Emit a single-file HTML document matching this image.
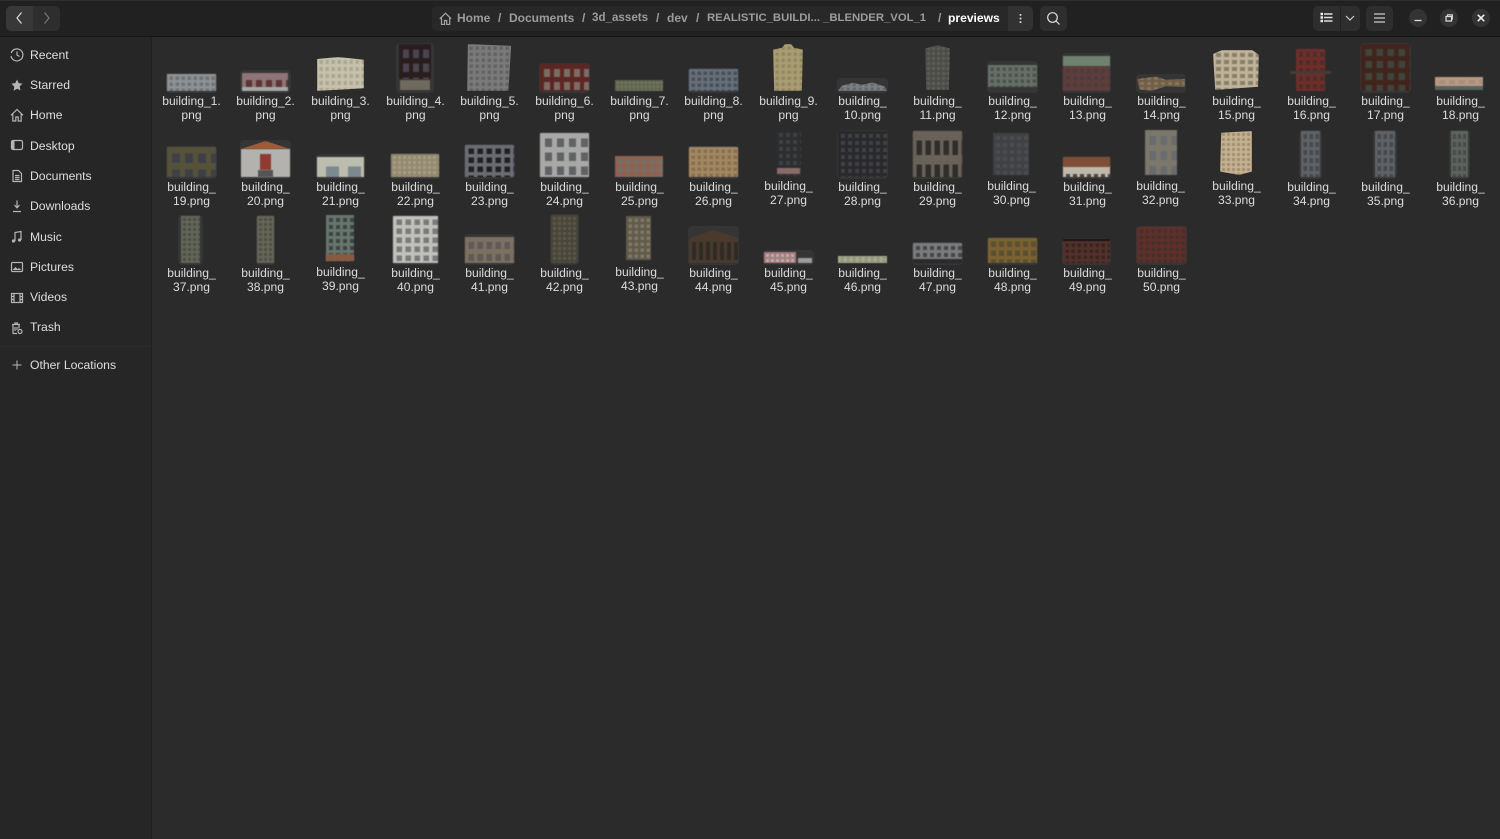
<!DOCTYPE html>
<html><head><meta charset="utf-8"><title>previews</title>
<style>
html,body{margin:0;padding:0;background:#2b2b2b}
#a{position:relative;width:1500px;height:839px;overflow:hidden;background:#2b2b2b;font-family:"Liberation Sans",sans-serif;font-size:13px;color:#dcdcdc}
#a div,#a span,#a svg{position:absolute}
#h{left:0;top:0;width:1500px;height:37px;background:#212121;border-top:1px solid #2d2d2d;box-sizing:border-box;border-bottom:1px solid #161616}
#s{left:0;top:37px;width:151px;height:802px;background:#262626;border-right:1px solid #1f1f1f}
.btn{background:#2e2e2e;border-radius:5px;top:6px;height:25px}
.c{top:9px;width:18px;height:18px;border-radius:50%;background:#333}
.cr{top:7px;font-weight:bold;font-size:12px;color:#9c9c9c;white-space:nowrap;line-height:22px}
.n{left:30px;white-space:nowrap;line-height:16px;font-size:12.2px;color:#dedede}
.l{width:81px;text-align:center;line-height:14px;font-size:12.1px;color:#dcdcdc;white-space:nowrap}
.t{background:#353535;border-radius:4px}
.t i{position:absolute;left:1px;right:1px;top:1px;bottom:2px;display:block;filter:blur(.55px);background:linear-gradient(90deg,var(--c) 40%,transparent 40%) 0 0/var(--x,6px) 100%,linear-gradient(var(--c) 40%,transparent 40%) 0 0/100% var(--y,6px),var(--w)}
svg{fill:none;stroke:#c8c8c8;stroke-width:1.2}
</style></head><body><div id="a">
<div id="h"></div>
<div id="s"></div>
<div style="left:151px;top:37px;width:1px;height:802px;background:#1f1f1f"></div>
<div class="btn" style="left:6px;width:27px;background:#383838;border-radius:5px 0 0 5px"></div>
<div class="btn" style="left:33px;width:27px;border-radius:0 5px 5px 0"></div>
<svg style="left:14px;top:11px" width="10" height="14" viewBox="0 0 10 14"><path d="M7.500 1.500 3 7l4.500 5.500" stroke="#ddd"/></svg>
<svg style="left:42px;top:11px" width="10" height="14" viewBox="0 0 10 14"><path d="M2.500 1.500 7 7l-4.500 5.500" stroke="#777"/></svg>
<div class="btn" style="left:432px;width:601px;background:#282828"></div>
<div class="btn" style="left:1008px;width:25px;background:#323232;border-radius:0 5px 5px 0"></div>
<svg style="left:439px;top:12px" width="13" height="13" viewBox="0 0 13 13"><path d="M.8 6.800 6.500 1.200l5.700 5.600M2.500 5.500v7h3V8.500h2.200v4h3v-7" stroke="#a5a5a5"/></svg>
<span class="cr" style="left:457px">Home</span><span class="cr" style="left:498px">/</span>
<span class="cr" style="left:509px">Documents</span><span class="cr" style="left:582px">/</span>
<span class="cr" style="left:592px;font-size:11.6px">3d_assets</span><span class="cr" style="left:656px">/</span>
<span class="cr" style="left:667px">dev</span><span class="cr" style="left:696px">/</span>
<span class="cr" style="left:707px;font-size:11.3px">REALISTIC_BUILDI... _BLENDER_VOL_1</span><span class="cr" style="left:938px">/</span>
<span class="cr" style="left:948px;color:#fff;font-size:12.100px">previews</span>
<svg style="left:1014px;top:12px" width="13" height="13" viewBox="0 0 13 13"><path d="M6.500 2v1.800M6.500 5.600v1.800M6.500 9.200v1.800" stroke="#ddd" stroke-width="1.700"/></svg>
<div class="btn" style="left:1040px;width:27px"></div>
<svg style="left:1046px;top:11px" width="15" height="15" viewBox="0 0 15 15"><circle cx="6.500" cy="6.500" r="4.800" stroke="#ddd"/><path d="m10 10 3.500 3.500" stroke="#ddd"/></svg>
<div class="btn" style="left:1313px;width:27px;border-radius:5px 0 0 5px"></div>
<div class="btn" style="left:1341px;width:19px;border-radius:0 5px 5px 0"></div>
<svg style="left:1320px;top:12px" width="13" height="12" viewBox="0 0 13 12"><path d="M4 2h8.500M4 5.500h8.500M4 9h8.500" stroke="#ddd" stroke-width="1.400"/><path d="M.5 2h2.500M.5 5.500h2.500M.5 9h2.500" stroke="#eee" stroke-width="2.400"/></svg>
<svg style="left:1345px;top:14px" width="10" height="9" viewBox="0 0 10 9"><path d="m1 2 4 4 4-4" stroke="#ccc"/></svg>
<div class="btn" style="left:1366px;width:27px"></div>
<svg style="left:1373px;top:12px" width="13" height="12" viewBox="0 0 13 12"><path d="M1 2h11M1 6h11M1 10h11" stroke="#ccc" stroke-width="1.300"/></svg>
<div class="c" style="left:1409px"></div><div class="c" style="left:1440px"></div><div class="c" style="left:1472px"></div>
<svg style="left:1409px;top:9px" width="18" height="18" viewBox="0 0 18 18"><path d="M5.500 11.500h7" stroke="#ddd" stroke-width="1.300"/></svg>
<svg style="left:1440px;top:9px" width="18" height="18" viewBox="0 0 18 18"><path d="M6 7.500h5.500V12H6zM7.500 7.500V5.800h4.800v4.400h-.8" stroke="#ddd"/></svg>
<svg style="left:1472px;top:9px" width="18" height="18" viewBox="0 0 18 18"><path d="m5.800 5.800 6.400 6.400m0-6.400-6.400 6.400" stroke="#eee" stroke-width="1.600"/></svg>

<svg style="left:10px;top:48px" width="14" height="14" viewBox="0 0 14 14"><path d="M1.200 5A6 6 0 1 1 1 8M7 3.500V7l2.500 1.500" stroke="#b5b5b5"/></svg><div class="n" style="top:47px">Recent</div>
<svg style="left:10px;top:78px" width="14" height="14" viewBox="0 0 14 14"><path d="m7 1.500 1.700 3.600 3.800.5-2.800 2.700.7 3.900L7 10.800l-3.400 1.900.7-3.900L1.500 5.600l3.800-.5z" fill="#b5b5b5" stroke="none"/></svg><div class="n" style="top:77px">Starred</div>
<svg style="left:10px;top:108px" width="14" height="14" viewBox="0 0 14 14"><path d="M1 7.300 7 1.500l6 5.800M2.800 6v7h3V9h2.400v4h3V6" stroke="#b5b5b5"/></svg><div class="n" style="top:107px">Home</div>
<svg style="left:10px;top:138px" width="14" height="14" viewBox="0 0 14 14"><rect x="1.500" y="2.500" width="11" height="9" rx="1.500" stroke="#b5b5b5"/><path d="M2 3h2.500v8H2z" fill="#b5b5b5" stroke="none"/></svg><div class="n" style="top:138px">Desktop</div>
<svg style="left:10px;top:169px" width="14" height="14" viewBox="0 0 14 14"><path d="M3 1.500h5.500L11.500 4.500v8H3zM5 6.500h4.500M5 8.500h4.500M5 10.500h4.500" stroke="#b5b5b5"/></svg><div class="n" style="top:168px">Documents</div>
<svg style="left:10px;top:199px" width="14" height="14" viewBox="0 0 14 14"><path d="M7 1.500v7M4.500 6 7 8.800 9.500 6M3 12.500h8" stroke="#b5b5b5"/></svg><div class="n" style="top:198px">Downloads</div>
<svg style="left:10px;top:230px" width="14" height="14" viewBox="0 0 14 14"><path d="M5 11V2.500l6-1V10" stroke="#b5b5b5"/><circle cx="3.500" cy="11" r="1.600" fill="#b5b5b5" stroke="none"/><circle cx="9.500" cy="10" r="1.600" fill="#b5b5b5" stroke="none"/></svg><div class="n" style="top:229px">Music</div>
<svg style="left:10px;top:260px" width="14" height="14" viewBox="0 0 14 14"><rect x="1.500" y="2.500" width="11" height="9" rx="1" stroke="#b5b5b5"/><path d="m2.500 10 3-3 2 2 1.500-1 2.500 2z" fill="#b5b5b5" stroke="none"/></svg><div class="n" style="top:259px">Pictures</div>
<svg style="left:10px;top:291px" width="14" height="14" viewBox="0 0 14 14"><rect x="1.500" y="2.500" width="11" height="9" stroke="#b5b5b5"/><path d="M4 2.500v9M10 2.500v9M1.500 5.500H4M1.500 8.500H4M10 5.500h2.500M10 8.500h2.500" stroke="#b5b5b5"/></svg><div class="n" style="top:289px">Videos</div>
<svg style="left:10px;top:321px" width="14" height="14" viewBox="0 0 14 14"><path d="M2 3.500h8M3 3.500v9h4M9 3.500v4M5 3.500V2h2.500v1.500M5 6v4M7 6v3" stroke="#b5b5b5"/><circle cx="10" cy="10.500" r="2" stroke="#b5b5b5"/></svg><div class="n" style="top:319px">Trash</div>
<div style="left:0;top:346px;width:151px;height:1px;background:#2c2c2c"></div>
<svg style="left:10px;top:358px" width="14" height="14" viewBox="0 0 14 14"><path d="M7 2.500v9M2.500 7h9" stroke="#b5b5b5" stroke-width="1"/></svg><div class="n" style="top:357px">Other Locations</div>

<div class="t" style="left:166px;top:73px;width:51px;height:20px"><i style="--c:#8d9296;--w:#6c7276;--x:6px;--y:6px"></i></div><div class="l" style="left:151px;top:94px">building_1.<br>png</div>
<div class="t" style="left:240px;top:70px;width:51px;height:23px"><i style="--c:#8f7478;--w:#5c3434;--x:10px;--y:18px;left:2px;right:3px;top:3px;border-bottom:4px solid #a8a8a8"></i></div><div class="l" style="left:225px;top:94px">building_2.<br>png</div>
<div class="t" style="left:316px;top:56px;width:49px;height:37px;background:none"><i style="--c:#c6c2ac;--w:#aaa690;--x:6px;--y:7px;clip-path:polygon(0 6%,45% 0,100% 8%,100% 92%,0 100%)"></i></div><div class="l" style="left:300px;top:94px">building_3.<br>png</div>
<div class="t" style="left:396px;top:43px;width:38px;height:50px"><i style="--c:#2a1d1e;--w:#4a4550;--x:10px;--y:14px;left:3px;right:3px;bottom:14px"></i><i style="background:#6e6a60;left:4px;right:4px;top:37px;bottom:3px"></i></div><div class="l" style="left:375px;top:94px">building_4.<br>png</div>
<div class="t" style="left:466px;top:43px;width:47px;height:50px;background:none"><i style="--c:#7b7b7e;--w:#646260;--x:6px;--y:6px;clip-path:polygon(2% 0,98% 4%,92% 100%,0 100%)"></i></div><div class="l" style="left:449px;top:94px">building_5.<br>png</div>
<div class="t" style="left:539px;top:63px;width:51px;height:30px"><i style="--c:#5c2623;--w:#7c6c66;--x:10px;--y:13px"></i></div><div class="l" style="left:524px;top:94px">building_6.<br>png</div>
<div class="t" style="left:614px;top:79px;width:50px;height:14px;background:none"><i style="--c:#5e6350;--w:#72775f;--x:4px;--y:4px"></i></div><div class="l" style="left:599px;top:94px">building_7.<br>png</div>
<div class="t" style="left:688px;top:68px;width:51px;height:25px"><i style="--c:#667079;--w:#474f59;--x:6px;--y:6px"></i></div><div class="l" style="left:673px;top:94px">building_8.<br>png</div>
<div class="t" style="left:772px;top:43px;width:32px;height:50px;background:none"><i style="--c:#a99e72;--w:#928763;--x:6px;--y:6px;clip-path:polygon(0 12%,30% 8%,40% 0,60% 0,70% 8%,100% 12%,96% 100%,4% 100%)"></i></div><div class="l" style="left:748px;top:94px">building_9.<br>png</div>
<div class="t" style="left:837px;top:78px;width:51px;height:15px"><i style="--c:#7e8286;--w:#62666a;--x:6px;--y:4px;top:4px;clip-path:polygon(0 100%,8% 40%,30% 10%,50% 30%,70% 5%,95% 50%,100% 100%)"></i></div><div class="l" style="left:822px;top:94px">building_<br>10.png</div>
<div class="t" style="left:924px;top:44px;width:27px;height:48px;background:none"><i style="--c:#4a4a47;--w:#5f5e58;--x:5px;--y:5px;clip-path:polygon(0 8%,50% 0,100% 8%,95% 100%,5% 100%)"></i></div><div class="l" style="left:897px;top:94px">building_<br>11.png</div>
<div class="t" style="left:987px;top:61px;width:51px;height:32px"><i style="--c:#667069;--w:#4b534b;--x:6px;--y:6px;top:4px;bottom:6px"></i></div><div class="l" style="left:972px;top:94px">building_<br>12.png</div>
<div class="t" style="left:1062px;top:53px;width:49px;height:40px"><i style="--c:#5f3d3c;--w:#4a3d3d;--x:7px;--y:7px;top:13px"></i><i style="background:#6f8270;bottom:27px;top:3px"></i></div><div class="l" style="left:1047px;top:94px">building_<br>13.png</div>
<div class="t" style="left:1136px;top:74px;width:50px;height:19px"><i style="--c:#705d46;--w:#85775f;--x:7px;--y:5px;clip-path:polygon(0 25%,40% 10%,60% 30%,100% 25%,100% 75%,60% 70%,30% 100%,5% 90%)"></i></div><div class="l" style="left:1121px;top:94px">building_<br>14.png</div>
<div class="t" style="left:1212px;top:49px;width:48px;height:43px;background:none"><i style="--c:#c2b498;--w:#857f6c;--x:8px;--y:7px;clip-path:polygon(0 10%,20% 0,85% 0,100% 12%,98% 92%,5% 100%)"></i></div><div class="l" style="left:1196px;top:94px">building_<br>15.png</div>
<div class="t" style="left:1289px;top:48px;width:43px;height:45px;background:none"><i style="--c:#6f2e2a;--w:#512b29;--x:7px;--y:8px;left:7px;right:7px"></i><i style="background:#4a3a34;top:23px;height:3px;bottom:auto"></i></div><div class="l" style="left:1271px;top:94px">building_<br>16.png</div>
<div class="t" style="left:1360px;top:43px;width:51px;height:50px"><i style="--c:#41251c;--w:#3f443c;--x:11px;--y:12px"></i></div><div class="l" style="left:1345px;top:94px">building_<br>17.png</div>
<div class="t" style="left:1434px;top:76px;width:50px;height:16px;background:none"><i style="--c:#b89a84;--w:#a88f7c;--x:10px;--y:7px;border-bottom:4px solid #57655f"></i></div><div class="l" style="left:1420px;top:94px">building_<br>18.png</div>

<div class="t" style="left:166px;top:146px;width:51px;height:33px"><i style="--c:#555239;--w:#3e4048;--x:13px;--y:16px"></i></div><div class="l" style="left:151px;top:180px">building_<br>19.png</div>
<div class="t" style="left:240px;top:140px;width:51px;height:39px"><i style="--c:#b4b2ae;--w:#b4b2ae;top:9px"></i><i style="background:#a05a38;bottom:30px;clip-path:polygon(0 100%,50% 0,100% 100%)"></i><i style="background:#8f3b34;left:20px;right:20px;top:14px;bottom:9px"></i><i style="background:#555;left:18px;right:18px;top:30px;bottom:2px"></i></div><div class="l" style="left:225px;top:180px">building_<br>20.png</div>
<div class="t" style="left:316px;top:154px;width:49px;height:25px"><i style="--c:#bdbdaf;--w:#7c8a90;--x:22px;--y:24px;top:3px"></i></div><div class="l" style="left:300px;top:180px">building_<br>21.png</div>
<div class="t" style="left:390px;top:153px;width:50px;height:26px"><i style="--c:#91886f;--w:#a89d84;--x:5px;--y:5px"></i></div><div class="l" style="left:375px;top:180px">building_<br>22.png</div>
<div class="t" style="left:464px;top:144px;width:51px;height:35px"><i style="--c:#6a6c72;--w:#1f2024;--x:9px;--y:9px"></i></div><div class="l" style="left:449px;top:180px">building_<br>23.png</div>
<div class="t" style="left:539px;top:132px;width:51px;height:47px"><i style="--c:#a8a8a6;--w:#606263;--x:12px;--y:14px"></i></div><div class="l" style="left:524px;top:180px">building_<br>24.png</div>
<div class="t" style="left:614px;top:155px;width:50px;height:24px;background:none"><i style="--c:#8f6252;--w:#75706a;--x:8px;--y:8px"></i></div><div class="l" style="left:599px;top:180px">building_<br>25.png</div>
<div class="t" style="left:688px;top:146px;width:51px;height:33px"><i style="--c:#a38860;--w:#866e52;--x:6px;--y:6px"></i></div><div class="l" style="left:673px;top:180px">building_<br>26.png</div>
<div class="t" style="left:775px;top:129px;width:27px;height:49px;background:none"><i style="--c:#2c2d2e;--w:#3e4042;--x:7px;--y:7px"></i><i style="background:#8a6a6a;top:39px;bottom:4px;left:2px;right:2px"></i></div><div class="l" style="left:748px;top:179px">building_<br>27.png</div>
<div class="t" style="left:837px;top:130px;width:51px;height:49px"><i style="--c:#29292b;--w:#3f4145;--x:7px;--y:7px"></i></div><div class="l" style="left:822px;top:180px">building_<br>28.png</div>
<div class="t" style="left:912px;top:130px;width:51px;height:49px"><i style="--c:#686258;--w:#302e2a;--x:9px;--y:24px"></i></div><div class="l" style="left:897px;top:180px">building_<br>29.png</div>
<div class="t" style="left:992px;top:132px;width:38px;height:45px;background:none"><i style="--c:#3f4144;--w:#4a4d50;--x:7px;--y:7px"></i></div><div class="l" style="left:971px;top:179px">building_<br>30.png</div>
<div class="t" style="left:1062px;top:156px;width:49px;height:23px"><i style="--c:#c0b8a8;--w:#4a4642;--x:7px;--y:20px;top:10px"></i><i style="background:#7d4f36;bottom:12px"></i></div><div class="l" style="left:1047px;top:180px">building_<br>31.png</div>
<div class="t" style="left:1144px;top:129px;width:34px;height:48px;background:none"><i style="--c:#7b776b;--w:#686c6e;--x:11px;--y:15px"></i></div><div class="l" style="left:1120px;top:179px">building_<br>32.png</div>
<div class="t" style="left:1219px;top:130px;width:34px;height:47px;background:none"><i style="--c:#c9b592;--w:#9c8b72;--x:5px;--y:5px;clip-path:polygon(4% 4%,100% 0,100% 55%,100% 92%,60% 100%,0 92%)"></i></div><div class="l" style="left:1196px;top:179px">building_<br>33.png</div>
<div class="t" style="left:1299px;top:130px;width:23px;height:49px"><i style="--c:#5f6367;--w:#45484c;--x:6px;--y:8px;left:2px;right:2px"></i></div><div class="l" style="left:1271px;top:180px">building_<br>34.png</div>
<div class="t" style="left:1373px;top:130px;width:24px;height:49px"><i style="--c:#5f6367;--w:#45484c;--x:6px;--y:8px;left:2px;right:2px"></i></div><div class="l" style="left:1345px;top:180px">building_<br>35.png</div>
<div class="t" style="left:1449px;top:130px;width:21px;height:49px"><i style="--c:#5f645f;--w:#454a48;--x:5px;--y:8px;left:2px;right:2px"></i></div><div class="l" style="left:1420px;top:180px">building_<br>36.png</div>

<div class="t" style="left:178px;top:215px;width:25px;height:50px"><i style="--c:#62675a;--w:#4a4e42;--x:5px;--y:5px;left:3px;right:3px"></i></div><div class="l" style="left:151px;top:266px">building_<br>37.png</div>
<div class="t" style="left:256px;top:215px;width:19px;height:50px"><i style="--c:#66665a;--w:#4e4e42;--x:5px;--y:5px"></i></div><div class="l" style="left:225px;top:266px">building_<br>38.png</div>
<div class="t" style="left:325px;top:214px;width:30px;height:49px;background:none"><i style="--c:#66766f;--w:#3b4340;--x:7px;--y:7px"></i><i style="background:#8a5a40;top:40px"></i></div><div class="l" style="left:300px;top:265px">building_<br>39.png</div>
<div class="t" style="left:392px;top:215px;width:47px;height:50px"><i style="--c:#c0c0bc;--w:#7a7a7a;--x:9px;--y:9px"></i></div><div class="l" style="left:375px;top:266px">building_<br>40.png</div>
<div class="t" style="left:464px;top:234px;width:51px;height:31px"><i style="--c:#7c7062;--w:#5f5a55;--x:9px;--y:12px;top:3px"></i></div><div class="l" style="left:449px;top:266px">building_<br>41.png</div>
<div class="t" style="left:550px;top:214px;width:29px;height:51px"><i style="--c:#47453b;--w:#5c5946;--x:5px;--y:5px"></i></div><div class="l" style="left:524px;top:266px">building_<br>42.png</div>
<div class="t" style="left:625px;top:215px;width:27px;height:47px;background:none"><i style="--c:#625a4a;--w:#7d796b;--x:6px;--y:6px"></i></div><div class="l" style="left:599px;top:265px">building_<br>43.png</div>
<div class="t" style="left:688px;top:226px;width:51px;height:39px"><i style="--c:#4a3a2e;--w:#2e2a26;--x:7px;--y:30px;top:4px;clip-path:polygon(0 25%,50% 0,100% 25%,100% 100%,0 100%)"></i></div><div class="l" style="left:673px;top:266px">building_<br>44.png</div>
<div class="t" style="left:763px;top:250px;width:51px;height:15px"><i style="--c:#a87a7c;--w:#b8b0b0;--x:5px;--y:5px;right:18px;top:2px"></i><i style="background:#9c9c9c;left:35px;right:2px;top:8px;bottom:2px"></i></div><div class="l" style="left:748px;top:266px">building_<br>45.png</div>
<div class="t" style="left:837px;top:255px;width:51px;height:10px;background:none"><i style="--c:#a9a98c;--w:#8f947f;--x:6px;--y:3px"></i></div><div class="l" style="left:822px;top:266px">building_<br>46.png</div>
<div class="t" style="left:912px;top:242px;width:51px;height:23px"><i style="--c:#7b7c7c;--w:#444648;--x:7px;--y:7px;border-bottom:4px solid #2a2a2c"></i></div><div class="l" style="left:897px;top:266px">building_<br>47.png</div>
<div class="t" style="left:987px;top:237px;width:51px;height:28px"><i style="--c:#7c6232;--w:#5b5030;--x:8px;--y:9px"></i></div><div class="l" style="left:972px;top:266px">building_<br>48.png</div>
<div class="t" style="left:1062px;top:238px;width:49px;height:27px"><i style="--c:#55302a;--w:#352620;--x:6px;--y:6px;border-top:2px solid #151515"></i></div><div class="l" style="left:1047px;top:266px">building_<br>49.png</div>
<div class="t" style="left:1136px;top:226px;width:51px;height:39px"><i style="--c:#602f29;--w:#42302c;--x:6px;--y:6px"></i></div><div class="l" style="left:1121px;top:266px">building_<br>50.png</div>
</div></body></html>
